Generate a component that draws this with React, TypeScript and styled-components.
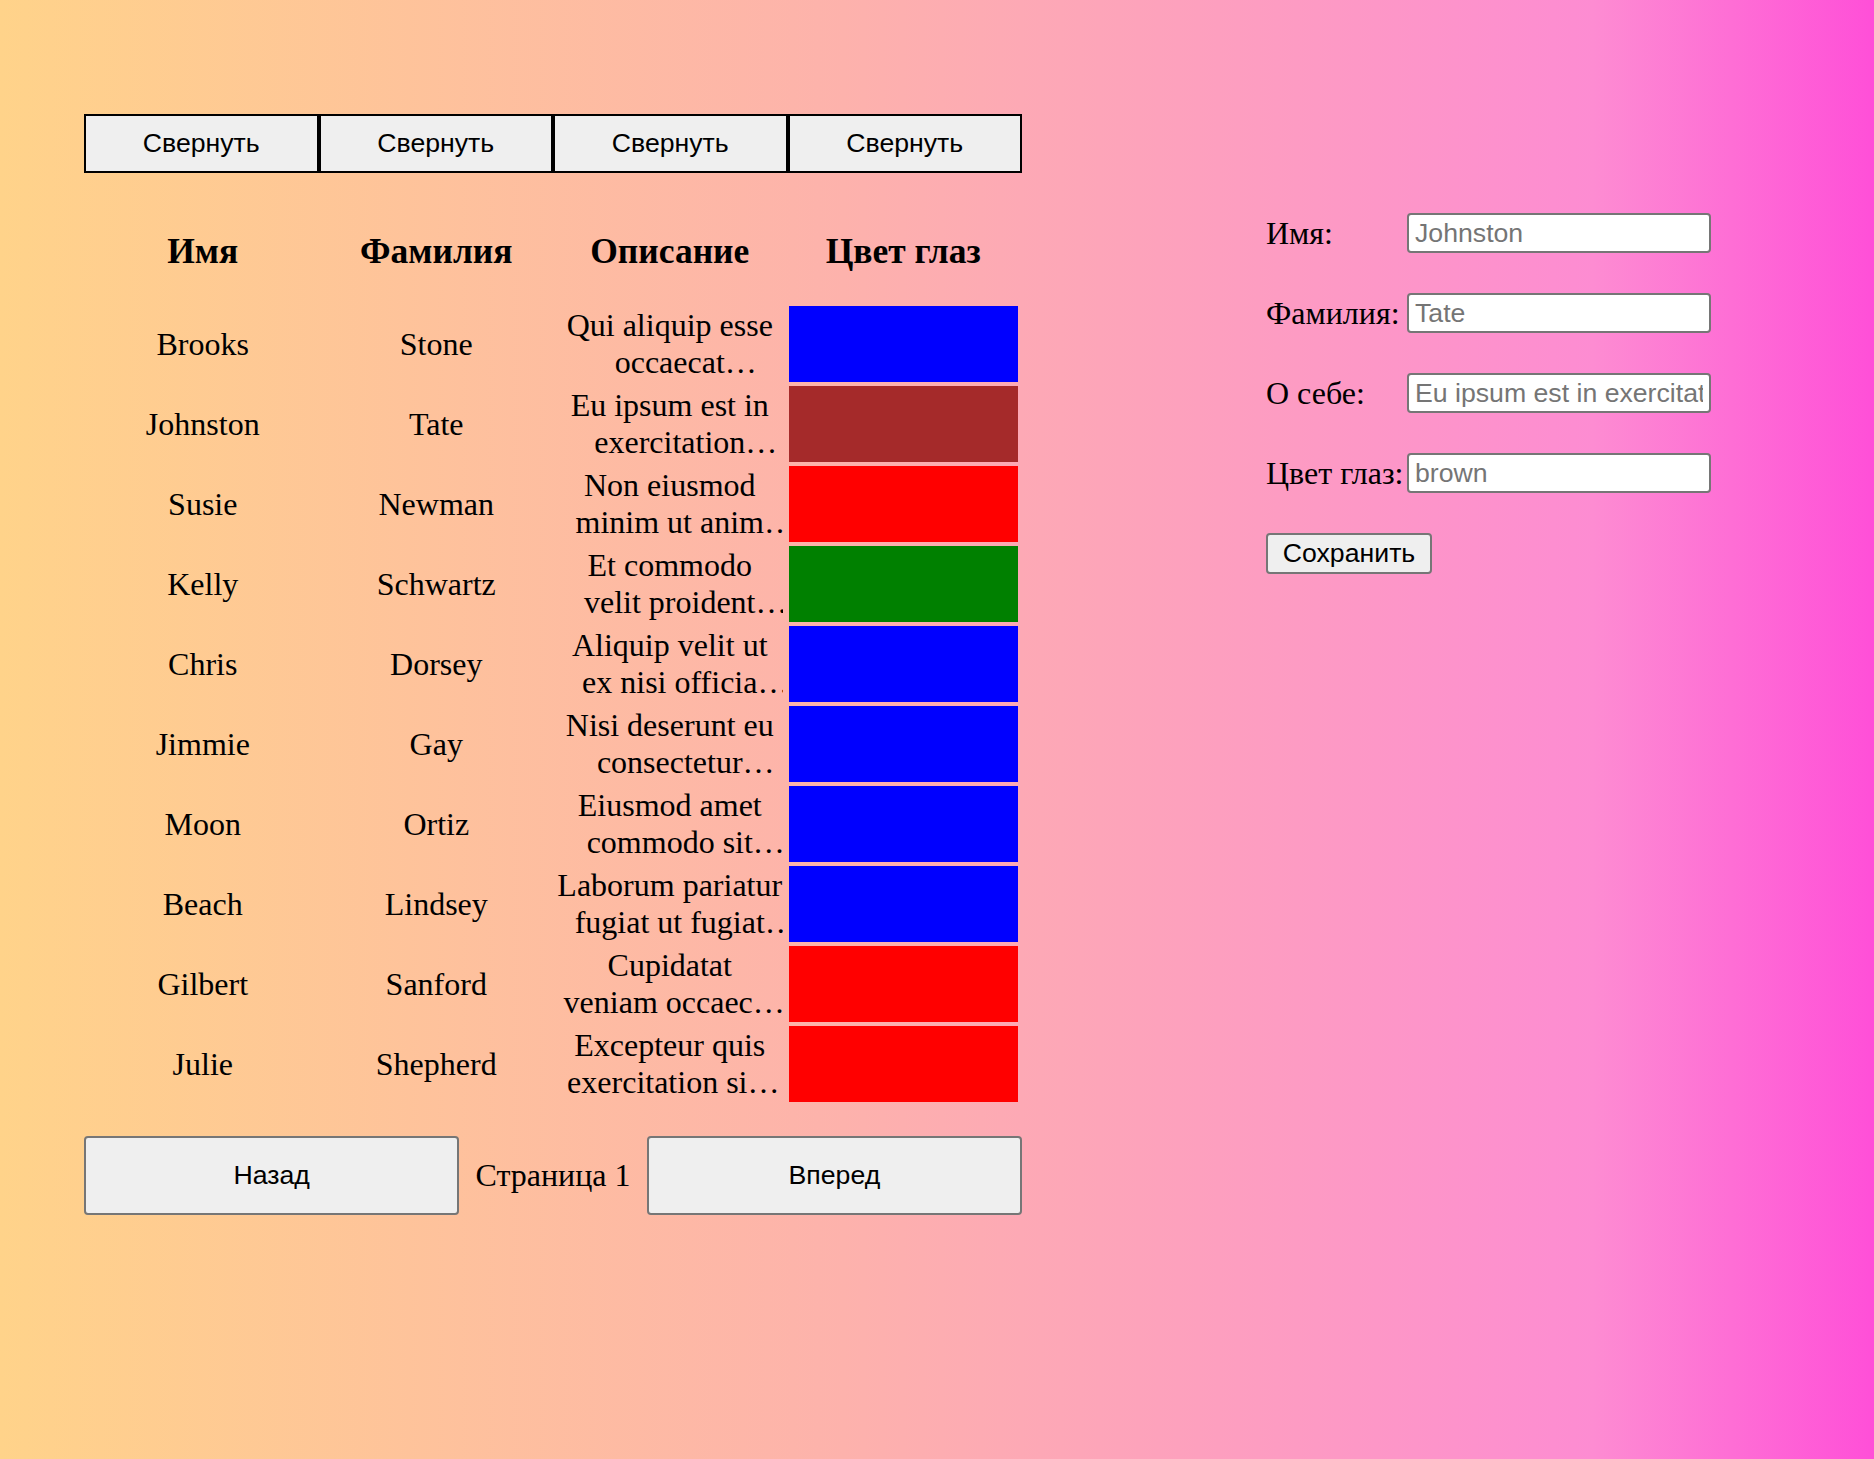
import React from "react";
import styled, { createGlobalStyle } from "styled-components";

const GlobalStyle = createGlobalStyle`
  html {
    min-height: 100%;
    background: linear-gradient(to right, #ffd38a 0%, #fdb2ac 45%, #fd8cd2 85%, #ff4fd8 100%);
  }
  body {
    margin: 0;
    font-family: "Liberation Serif", "Times New Roman", serif;
    font-size: 32px;
    color: #000;
  }
`;

const Page = styled.div`
  display: flex;
  align-items: flex-start;
  gap: 244px;
  padding: 114px 0 0 84px;
  min-height: 1459px;
  box-sizing: border-box;
`;

const TableArea = styled.section`
  width: 938px;
  display: flex;
  flex-direction: column;
`;

const Toolbar = styled.div`
  display: flex;
`;

const ToggleButton = styled.button`
  flex: 1;
  height: 59px;
  margin: 0;
  padding: 0;
  box-sizing: border-box;
  border: 2px solid #000;
  background: #efefef;
  color: #000;
  font-family: "Liberation Sans", Arial, sans-serif;
  font-size: 26.67px;
`;

const Grid = styled.div`
  display: grid;
  grid-template-columns: repeat(4, 1fr);
  gap: 4px;
  padding: 4px;
  margin-top: 23px;
`;

const HeadCell = styled.div`
  height: 102px;
  display: flex;
  align-items: center;
  justify-content: center;
  font-weight: bold;
  font-size: 35.5px;
`;

const Cell = styled.div`
  height: 76px;
  display: flex;
  align-items: center;
  justify-content: center;
  text-align: center;
`;

const Desc = styled.div`
  width: 225.5px;
  display: -webkit-box;
  -webkit-box-orient: vertical;
  -webkit-line-clamp: 2;
  overflow: hidden;
  text-align: center;
`;

const Swatch = styled.div<{ $color: string }>`
  height: 76px;
  background: ${(p) => p.$color};
`;

const Pager = styled.div`
  display: flex;
  align-items: center;
  margin-top: 30px;
`;

const PageButton = styled.button`
  width: 40%;
  height: 79px;
  margin: 0;
  box-sizing: border-box;
  border: 2px solid #767676;
  border-radius: 4px;
  background: #efefef;
  color: #000;
  font-family: "Liberation Sans", Arial, sans-serif;
  font-size: 26.67px;
`;

const PageLabel = styled.span`
  flex: 1;
  text-align: center;
`;

const Form = styled.form`
  margin-top: 99px;
  display: flex;
  flex-direction: column;
  align-items: flex-start;
  gap: 40px;
`;

const Field = styled.label`
  display: flex;
  align-items: center;
`;

const FieldLabel = styled.span`
  width: 141px;
  white-space: nowrap;
`;

const Input = styled.input`
  width: 304px;
  height: 40px;
  box-sizing: border-box;
  margin: 0;
  padding: 0 6px;
  border: 2px solid #767676;
  border-radius: 4px;
  background: #fff;
  font-family: "Liberation Sans", Arial, sans-serif;
  font-size: 26.67px;
  color: #000;
  &::placeholder {
    color: #757575;
  }
`;

const SaveButton = styled.button`
  width: 166px;
  height: 41px;
  margin: 0;
  padding: 0;
  box-sizing: border-box;
  border: 2px solid #767676;
  border-radius: 4px;
  background: #efefef;
  color: #000;
  font-family: "Liberation Sans", Arial, sans-serif;
  font-size: 26.67px;
`;

type Person = {
  first: string;
  last: string;
  about: string;
  eye: string;
};

const people: Person[] = [
  { first: "Brooks", last: "Stone", about: "Qui aliquip esse occaecat consectetur ad minim.", eye: "blue" },
  { first: "Johnston", last: "Tate", about: "Eu ipsum est in exercitation consequat dolor.", eye: "brown" },
  { first: "Susie", last: "Newman", about: "Non eiusmod minim ut anim laboris nulla.", eye: "red" },
  { first: "Kelly", last: "Schwartz", about: "Et commodo velit proident nostrud ullamco.", eye: "green" },
  { first: "Chris", last: "Dorsey", about: "Aliquip velit ut ex nisi officia proident.", eye: "blue" },
  { first: "Jimmie", last: "Gay", about: "Nisi deserunt eu consectetur cupidatat.", eye: "blue" },
  { first: "Moon", last: "Ortiz", about: "Eiusmod amet commodo sit laborum.", eye: "blue" },
  { first: "Beach", last: "Lindsey", about: "Laborum pariatur fugiat ut fugiat aliqua.", eye: "blue" },
  { first: "Gilbert", last: "Sanford", about: "Cupidatat veniam occaecat dolore irure.", eye: "red" },
  { first: "Julie", last: "Shepherd", about: "Excepteur quis exercitation sint labore.", eye: "red" },
];

const headers = ["Имя", "Фамилия", "Описание", "Цвет глаз"];

export default function App() {
  const selected = people[1];
  return (
    <>
      <GlobalStyle />
      <Page>
        <TableArea>
          <Toolbar>
            {headers.map((h) => (
              <ToggleButton key={h} type="button">
                Свернуть
              </ToggleButton>
            ))}
          </Toolbar>
          <Grid>
            {headers.map((h) => (
              <HeadCell key={h}>{h}</HeadCell>
            ))}
            {people.map((p) => (
              <React.Fragment key={p.first + p.last}>
                <Cell>{p.first}</Cell>
                <Cell>{p.last}</Cell>
                <Cell>
                  <Desc>{p.about}</Desc>
                </Cell>
                <Swatch $color={p.eye} />
              </React.Fragment>
            ))}
          </Grid>
          <Pager>
            <PageButton type="button">Назад</PageButton>
            <PageLabel>Страница 1</PageLabel>
            <PageButton type="button">Вперед</PageButton>
          </Pager>
        </TableArea>
        <Form onSubmit={(e) => e.preventDefault()}>
          <Field>
            <FieldLabel>Имя:</FieldLabel>
            <Input placeholder={selected.first} />
          </Field>
          <Field>
            <FieldLabel>Фамилия:</FieldLabel>
            <Input placeholder={selected.last} />
          </Field>
          <Field>
            <FieldLabel>О себе:</FieldLabel>
            <Input placeholder={selected.about} />
          </Field>
          <Field>
            <FieldLabel>Цвет глаз:</FieldLabel>
            <Input placeholder={selected.eye} />
          </Field>
          <SaveButton type="submit">Сохранить</SaveButton>
        </Form>
      </Page>
    </>
  );
}
